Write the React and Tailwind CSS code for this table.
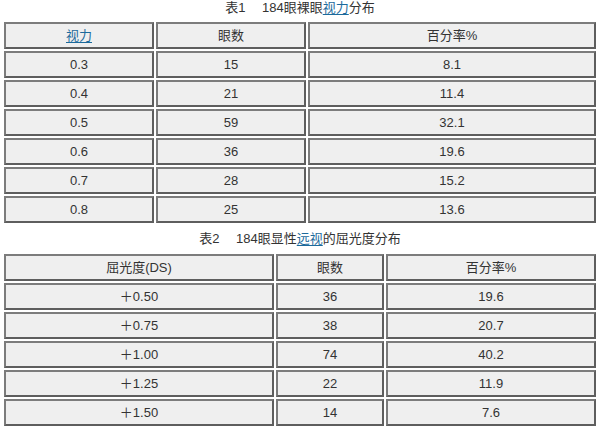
const visionRows = [
  ['0.3', '15', '8.1'],
  ['0.4', '21', '11.4'],
  ['0.5', '59', '32.1'],
  ['0.6', '36', '19.6'],
  ['0.7', '28', '15.2'],
  ['0.8', '25', '13.6'],
];

const refractionRows = [
  ['＋0.50', '36', '19.6'],
  ['＋0.75', '38', '20.7'],
  ['＋1.00', '74', '40.2'],
  ['＋1.25', '22', '11.9'],
  ['＋1.50', '14', '7.6'],
];

function Link({ children }) {
  return <span className="text-[#1c6a9c] underline underline-offset-2">{children}</span>;
}

function Cell({ children }) {
  return (
    <div className="h-[27px] flex items-center justify-center bg-[#efefef] border-2 border-t-[#7c7c7c] border-l-[#7c7c7c] border-r-[#5e5e5e] border-b-[#5e5e5e] text-[13px] text-[#333]">
      {children}
    </div>
  );
}

export default function App() {
  return (
    <div
      className="w-[599px] h-[433px] bg-white pl-[4px] pr-[3px] overflow-hidden"
      style={{ fontFamily: '"Liberation Sans", "Noto Sans CJK SC", sans-serif' }}
    >
      {/* Table 1 */}
      <div className="h-[22px] flex items-center justify-center text-[13px] text-[#333] pb-[6px]">
        表1　 184眼裸眼<Link>视力</Link>分布
      </div>
      <div className="grid grid-cols-[150px_150px_288px] gap-[2px]">
        <Cell><Link>视力</Link></Cell>
        <Cell>眼数</Cell>
        <Cell>百分率%</Cell>
        {visionRows.map((r) => r.map((v, i) => <Cell key={r[0] + i}>{v}</Cell>))}
      </div>

      {/* Table 2 */}
      <div className="h-[31px] flex items-center justify-center text-[13px] text-[#333]">
        表2　 184眼显性<Link>远视</Link>的屈光度分布
      </div>
      <div className="grid grid-cols-[270px_108px_210px] gap-[2px]">
        <Cell>屈光度(DS)</Cell>
        <Cell>眼数</Cell>
        <Cell>百分率%</Cell>
        {refractionRows.map((r) => r.map((v, i) => <Cell key={r[0] + i}>{v}</Cell>))}
      </div>
    </div>
  );
}
